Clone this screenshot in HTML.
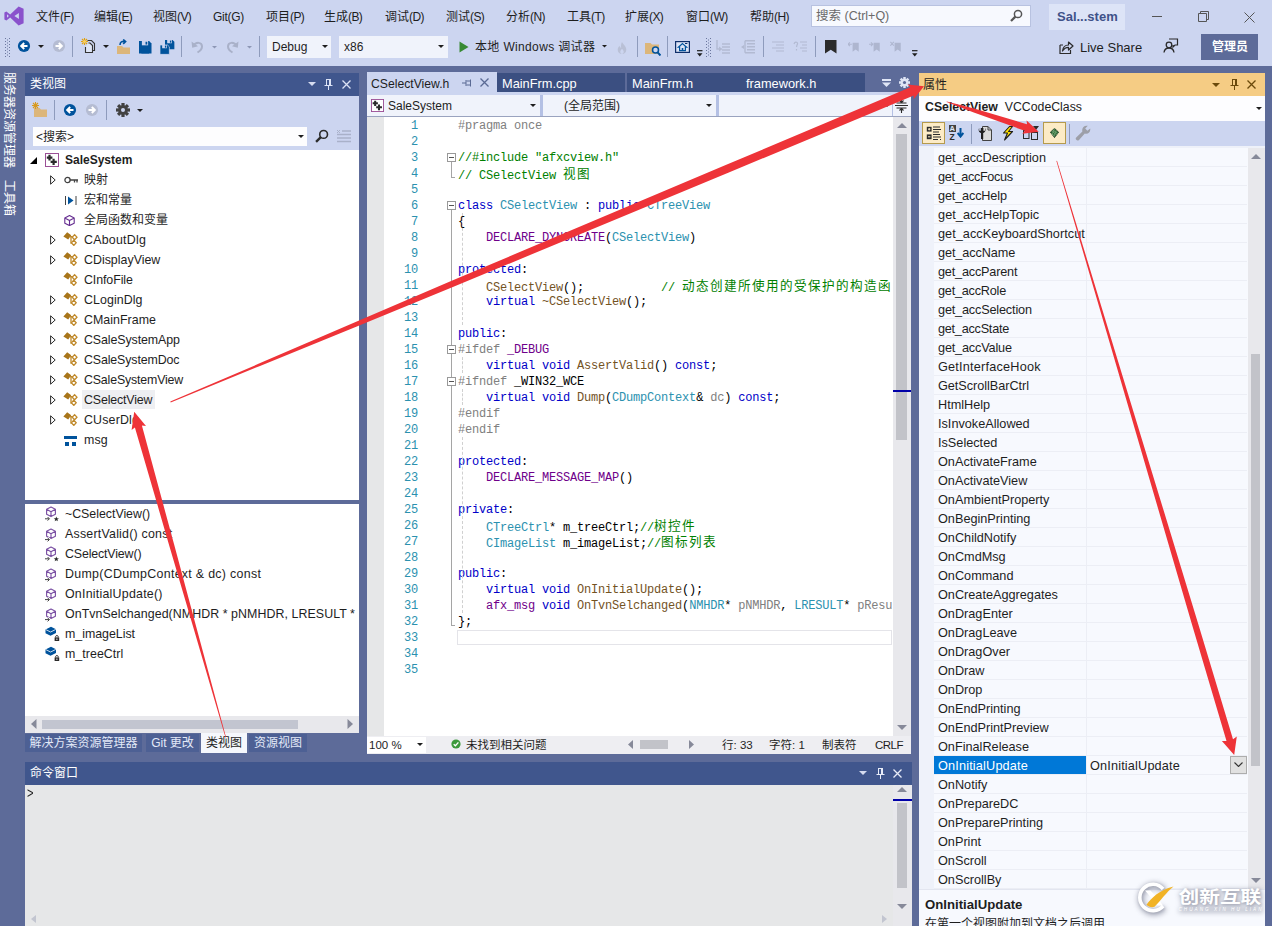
<!DOCTYPE html>
<html lang="zh-CN"><head><meta charset="utf-8"><title>SaleSystem - Visual Studio</title>
<style>
*{box-sizing:border-box;margin:0;padding:0}
html,body{width:1272px;height:926px;overflow:hidden}
body{background:#5d6b99;font-family:"Liberation Sans","Noto Sans CJK SC",sans-serif;font-size:12px;color:#1e1e1e;position:relative}
.abs{position:absolute}
.t{position:absolute;white-space:pre;line-height:14px;height:14px}
#top{position:absolute;left:0;top:0;width:1272px;height:66px;background:#ccd5f0}
.menu{position:absolute;top:10px;font-size:12px;line-height:14px;color:#1e1e1e;white-space:pre}
.sep{position:absolute;width:1px;background:#8e9bbc}
.combo{position:absolute;background:#f0f3fb;height:22px;top:36px;font-size:12px;line-height:22px;padding-left:5px;color:#1e1e1e}
.dd{position:absolute;width:0;height:0;border-left:3px solid transparent;border-right:3px solid transparent;border-top:3px solid #1e1e1e}
.panel-title{position:absolute;height:23px;background:#40568d;color:#fff;font-size:12px;line-height:23px;padding-left:5px}
.tree-row{position:absolute;left:0;height:20px;line-height:20px;font-size:12.4px;white-space:pre;color:#1e1e1e}
.code{font-family:"Liberation Mono","Noto Sans CJK SC",monospace;font-size:12px;letter-spacing:-0.2px;line-height:16px;white-space:pre;color:#000}
.cj{font-family:"Noto Sans CJK SC","WenQuanYi Zen Hei",sans-serif;font-size:12.6px;letter-spacing:1.4px;position:relative;top:-1.5px}
.ln{position:absolute;left:384px;width:34px;text-align:right;color:#2b91af;height:16px}
.cl{position:absolute;left:458px;height:16px}
.k{color:#0000c8}.ty{color:#2b91af}.mc{color:#6f008a}.pp{color:#808080}.cm{color:#008000}.fn{color:#74531f}.pr{color:#808080}
.prow{position:absolute;left:15px;width:313px;height:19px;border-bottom:1px solid #eceef5;font-size:12.7px;line-height:18px;white-space:pre;color:#1e1e1e}
.prow span{position:absolute;left:4px;top:1px}
</style></head><body>
<div id="top">
<svg class="abs" style="left:4px;top:6px" width="20" height="20" viewBox="0 0 20 20" ><path d="M14.6 0.6 L19.6 2.8 V17.2 L14.6 19.4 L6.2 11.6 L2.4 14.6 L0.4 13.6 V6.4 L2.4 5.4 L6.2 8.4 Z M14.9 7 L10.4 10 L14.9 13 Z M3 8.3 V11.7 L4.9 10 Z" fill="#8a52cc" fill-rule="evenodd"/></svg>
<div class="menu" style="left:36px">文件<span style="letter-spacing:-0.6px">(F)</span></div>
<div class="menu" style="left:94px">编辑<span style="letter-spacing:-0.6px">(E)</span></div>
<div class="menu" style="left:153px">视图<span style="letter-spacing:-0.6px">(V)</span></div>
<div class="menu" style="left:213px"><span style="letter-spacing:-0.3px">Git(G)</span></div>
<div class="menu" style="left:266px">项目<span style="letter-spacing:-0.6px">(P)</span></div>
<div class="menu" style="left:324px">生成<span style="letter-spacing:-0.6px">(B)</span></div>
<div class="menu" style="left:385px">调试<span style="letter-spacing:-0.6px">(D)</span></div>
<div class="menu" style="left:446px">测试<span style="letter-spacing:-0.6px">(S)</span></div>
<div class="menu" style="left:506px">分析<span style="letter-spacing:-0.6px">(N)</span></div>
<div class="menu" style="left:567px">工具<span style="letter-spacing:-0.6px">(T)</span></div>
<div class="menu" style="left:625px">扩展<span style="letter-spacing:-0.6px">(X)</span></div>
<div class="menu" style="left:686px">窗口<span style="letter-spacing:-0.6px">(W)</span></div>
<div class="menu" style="left:750px">帮助<span style="letter-spacing:-0.6px">(H)</span></div>
<div class="abs" style="left:811px;top:5px;width:220px;height:22px;background:#f7f9fe;border:1px solid #b8c2e0"></div>
<div class="t" style="left:816px;top:9px;color:#6a6a6a;font-size:12.5px;line-height:15px">搜索 (Ctrl+Q)</div>
<svg class="abs" style="left:1010px;top:9px" width="13" height="13" viewBox="0 0 13 13" ><circle cx="8" cy="5" r="3.6" fill="none" stroke="#555" stroke-width="1.5"/><path d="M5.4 7.6 L1 12" stroke="#555" stroke-width="2.2"/></svg>
<div class="abs" style="left:1049px;top:4px;width:76px;height:26px;background:#dde4f7"></div>
<div class="t" style="left:1057px;top:9px;font-weight:bold;font-size:13px;color:#3f5289;line-height:15px">Sal...stem</div>
<div class="abs" style="left:1152px;top:16px;width:10px;height:1px;background:#555"></div>
<svg class="abs" style="left:1198px;top:11px" width="11" height="11" viewBox="0 0 11 11" ><path d="M2.5 2.5 V0.5 H10.5 V8.5 H8.5 M0.5 2.5 H8.5 V10.5 H0.5 Z" fill="none" stroke="#555" stroke-width="1"/></svg>
<svg class="abs" style="left:1244px;top:12px" width="11" height="11" viewBox="0 0 11 11" ><path d="M0.5 0.5 L10.5 10.5 M10.5 0.5 L0.5 10.5" stroke="#555" stroke-width="1"/></svg>
<svg class="abs" style="left:5px;top:38px" width="5" height="19" viewBox="0 0 5 19" ><rect x="0" y="0" width="1" height="1" fill="#6a769e"/><rect x="2" y="1.5" width="1" height="1" fill="#6a769e"/><rect x="4" y="0" width="1" height="1" fill="#6a769e"/><rect x="0" y="3" width="1" height="1" fill="#6a769e"/><rect x="2" y="4.5" width="1" height="1" fill="#6a769e"/><rect x="4" y="3" width="1" height="1" fill="#6a769e"/><rect x="0" y="6" width="1" height="1" fill="#6a769e"/><rect x="2" y="7.5" width="1" height="1" fill="#6a769e"/><rect x="4" y="6" width="1" height="1" fill="#6a769e"/><rect x="0" y="9" width="1" height="1" fill="#6a769e"/><rect x="2" y="10.5" width="1" height="1" fill="#6a769e"/><rect x="4" y="9" width="1" height="1" fill="#6a769e"/><rect x="0" y="12" width="1" height="1" fill="#6a769e"/><rect x="2" y="13.5" width="1" height="1" fill="#6a769e"/><rect x="4" y="12" width="1" height="1" fill="#6a769e"/><rect x="0" y="15" width="1" height="1" fill="#6a769e"/><rect x="2" y="16.5" width="1" height="1" fill="#6a769e"/><rect x="4" y="15" width="1" height="1" fill="#6a769e"/><rect x="0" y="18" width="1" height="1" fill="#6a769e"/><rect x="2" y="19.5" width="1" height="1" fill="#6a769e"/><rect x="4" y="18" width="1" height="1" fill="#6a769e"/></svg>
<svg class="abs" style="left:17px;top:39px" width="14" height="14" viewBox="0 0 14 14" ><circle cx="7" cy="7" r="6.1" fill="#00539c"/><path d="M10.5 7 H4.5 M7.2 4 L4.2 7 L7.2 10" stroke="#fff" stroke-width="2" fill="none"/></svg>
<svg class="abs" style="left:38px;top:45px" width="6" height="3.0" viewBox="0 0 6 3.0" ><path d="M0 0 H6 L3.0 3.0 Z" fill="#1e1e1e"/></svg>
<svg class="abs" style="left:52px;top:39px" width="14" height="14" viewBox="0 0 14 14" ><circle cx="7" cy="7" r="6.1" fill="#b5bcd2"/><path d="M3.5 7 H9.5 M6.8 4 L9.8 7 L6.8 10" stroke="#fff" stroke-width="2" fill="none"/></svg>
<div class="sep" style="left:72px;top:36px;height:21px"></div>
<svg class="abs" style="left:81px;top:38px" width="15" height="16" viewBox="0 0 15 16" ><path d="M6.5 2.5 H10.5 L13.5 5.5 V12.5 H11.5" fill="none" stroke="#333" stroke-width="1.1"/><path d="M4.5 9 V14.5 H11.5 V7.5 L9 5 H7.5" fill="#dfe6f7" stroke="#333" stroke-width="1.1"/><path d="M3.5 0 V7 M0 3.5 H7 M1 1 L6 6 M6 1 L1 6" stroke="#e0a010" stroke-width="1.1"/><circle cx="3.5" cy="3.5" r="1.6" fill="#f8d060"/></svg>
<svg class="abs" style="left:103px;top:45px" width="6" height="3.0" viewBox="0 0 6 3.0" ><path d="M0 0 H6 L3.0 3.0 Z" fill="#1e1e1e"/></svg>
<svg class="abs" style="left:116px;top:39px" width="15" height="16" viewBox="0 0 15 16" ><path d="M1 7 H6 L7.5 8.5 H14 V15 H1 Z" fill="#dcb67a"/><path d="M4 6 C4 3 6 2 9 2.5 M7.2 0.5 L9.6 2.6 L7.2 4.8" fill="none" stroke="#00539c" stroke-width="1.6"/></svg>
<svg class="abs" style="left:139px;top:41px" width="12.5" height="12.5" viewBox="0 0 13 13" ><path d="M0 0 H10.5 L13 2.5 V13 H0 Z" fill="#00539c"/><rect x="3" y="0" width="6.5" height="4.5" fill="#ccd5f0"/><rect x="6.8" y="0.8" width="1.8" height="2.9" fill="#00539c"/><rect x="2.5" y="8" width="8" height="5" fill="#00539c"/></svg>
<svg class="abs" style="left:160px;top:40px" width="15" height="15" viewBox="0 0 15 15" ><g transform="translate(5,0) scale(0.72)"><path d="M0 0 H10.5 L13 2.5 V13 H0 Z" fill="#00539c"/><rect x="3" y="0" width="6.5" height="4.5" fill="#ccd5f0"/><rect x="6.8" y="0.8" width="1.8" height="2.9" fill="#00539c"/></g><g transform="translate(0,5) scale(0.72)"><path d="M0 0 H10.5 L13 2.5 V13 H0 Z" fill="#00539c" stroke="#ccd5f0" stroke-width="1"/><rect x="3" y="0" width="6.5" height="4.5" fill="#ccd5f0"/><rect x="6.8" y="0.8" width="1.8" height="2.9" fill="#00539c"/></g></svg>
<div class="sep" style="left:181px;top:36px;height:21px"></div>
<svg class="abs" style="left:191px;top:40px" width="13" height="14" viewBox="0 0 13 14" ><g><path d="M2 6 C5 1.5 11 2 11 6.5 C11 9.5 9 11 6.5 12.5" fill="none" stroke="#a9b1c9" stroke-width="2"/><path d="M0.5 1.5 L1.2 7.8 L7 6.2 Z" fill="#a9b1c9"/></g></svg>
<svg class="abs" style="left:212px;top:46px" width="5" height="2.5" viewBox="0 0 5 2.5" ><path d="M0 0 H5 L2.5 2.5 Z" fill="#8d97b5"/></svg>
<svg class="abs" style="left:226px;top:40px" width="13" height="14" viewBox="0 0 13 14" ><g transform="translate(13,0) scale(-1,1)"><path d="M2 6 C5 1.5 11 2 11 6.5 C11 9.5 9 11 6.5 12.5" fill="none" stroke="#a9b1c9" stroke-width="2"/><path d="M0.5 1.5 L1.2 7.8 L7 6.2 Z" fill="#a9b1c9"/></g></svg>
<svg class="abs" style="left:247px;top:46px" width="5" height="2.5" viewBox="0 0 5 2.5" ><path d="M0 0 H5 L2.5 2.5 Z" fill="#8d97b5"/></svg>
<div class="sep" style="left:259px;top:36px;height:21px"></div>
<div class="combo" style="left:267px;width:64px">Debug</div>
<svg class="abs" style="left:322px;top:45px" width="6" height="3.0" viewBox="0 0 6 3.0" ><path d="M0 0 H6 L3.0 3.0 Z" fill="#1e1e1e"/></svg>
<div class="combo" style="left:339px;width:109px">x86</div>
<svg class="abs" style="left:438px;top:45px" width="6" height="3.0" viewBox="0 0 6 3.0" ><path d="M0 0 H6 L3.0 3.0 Z" fill="#1e1e1e"/></svg>
<svg class="abs" style="left:459px;top:41px" width="10" height="12" viewBox="0 0 10 12" ><path d="M0.5 0.5 L9.5 6 L0.5 11.5 Z" fill="#388a34"/></svg>
<div class="t" style="left:475px;top:40px;letter-spacing:0.35px">本地 Windows 调试器</div>
<svg class="abs" style="left:602px;top:45px" width="5" height="2.5" viewBox="0 0 5 2.5" ><path d="M0 0 H5 L2.5 2.5 Z" fill="#1e1e1e"/></svg>
<svg class="abs" style="left:617px;top:42px" width="10" height="12" viewBox="0 0 11 14" ><path d="M5.5 0 C7 3 10.5 5 10.5 9 C10.5 12 8.5 14 5.5 14 C2.5 14 0.5 12 0.5 9 C0.5 7 1.5 6 2.5 4.5 C3 6 3.5 6.5 4.5 7 C4 4 4.5 2 5.5 0 Z" fill="#b9c0d6"/><path d="M5.5 8 C6.5 9.5 7.5 10 7.5 11.5 C7.5 13 6.5 14 5.5 14 C4.5 14 3.5 13 3.5 11.5 C3.5 10 4.5 9.5 5.5 8Z" fill="#ccd5f0"/></svg>
<div class="sep" style="left:637px;top:36px;height:21px"></div>
<svg class="abs" style="left:645px;top:41px" width="16" height="15" viewBox="0 0 16 15" ><path d="M0 2 H5.5 L7 3.5 H14 V13 H0 Z" fill="#dcb67a"/><circle cx="10.5" cy="9" r="3" fill="#ccd5f0" stroke="#00539c" stroke-width="1.5"/><path d="M12.6 11.4 L15.5 14.5" stroke="#00539c" stroke-width="2"/></svg>
<div class="sep" style="left:667px;top:36px;height:21px"></div>
<svg class="abs" style="left:675px;top:41px" width="15" height="12" viewBox="0 0 15 12" ><rect x="0.6" y="0.6" width="13.8" height="10.8" fill="#dbe3f6" stroke="#0f2f6a" stroke-width="1.2"/><path d="M7.5 2.6 L11.6 6.2 H10.4 V9.6 H4.6 V6.2 H3.4 Z" fill="none" stroke="#00539c" stroke-width="1.2"/><rect x="6.7" y="7" width="1.6" height="2.6" fill="#00539c"/><rect x="10" y="2" width="2.4" height="1" fill="#0f2f6a"/></svg>
<svg class="abs" style="left:697px;top:50px" width="5.5" height="6.5" viewBox="0 0 7 8" ><rect x="0" y="0" width="7" height="1.5" fill="#1e1e1e"/><path d="M0 4 H7 L3.5 8 Z" fill="#1e1e1e"/></svg>
<svg class="abs" style="left:706px;top:38px" width="5" height="19" viewBox="0 0 5 19" ><rect x="0" y="0" width="1" height="1" fill="#6a769e"/><rect x="2" y="1.5" width="1" height="1" fill="#6a769e"/><rect x="4" y="0" width="1" height="1" fill="#6a769e"/><rect x="0" y="3" width="1" height="1" fill="#6a769e"/><rect x="2" y="4.5" width="1" height="1" fill="#6a769e"/><rect x="4" y="3" width="1" height="1" fill="#6a769e"/><rect x="0" y="6" width="1" height="1" fill="#6a769e"/><rect x="2" y="7.5" width="1" height="1" fill="#6a769e"/><rect x="4" y="6" width="1" height="1" fill="#6a769e"/><rect x="0" y="9" width="1" height="1" fill="#6a769e"/><rect x="2" y="10.5" width="1" height="1" fill="#6a769e"/><rect x="4" y="9" width="1" height="1" fill="#6a769e"/><rect x="0" y="12" width="1" height="1" fill="#6a769e"/><rect x="2" y="13.5" width="1" height="1" fill="#6a769e"/><rect x="4" y="12" width="1" height="1" fill="#6a769e"/><rect x="0" y="15" width="1" height="1" fill="#6a769e"/><rect x="2" y="16.5" width="1" height="1" fill="#6a769e"/><rect x="4" y="15" width="1" height="1" fill="#6a769e"/><rect x="0" y="18" width="1" height="1" fill="#6a769e"/><rect x="2" y="19.5" width="1" height="1" fill="#6a769e"/><rect x="4" y="18" width="1" height="1" fill="#6a769e"/></svg>
<svg class="abs" style="left:716px;top:40px" width="15" height="14" viewBox="0 0 15 14" ><path d="M1 0 V9 H5 M6 4 H14 M6 7 H14 M6 10 H14 M6 13 H14" stroke="#b2bad2" stroke-width="1.4" fill="none"/><path d="M3 6.5 L6.5 9 L3 11.5Z" fill="#b2bad2"/></svg>
<svg class="abs" style="left:741px;top:40px" width="15" height="14" viewBox="0 0 15 14" ><path d="M4 0.7 H14 M6 3.7 H14 M6 6.7 H14 M6 9.7 H14 M4 12.7 H14 M4 0.7 V12.7" stroke="#b2bad2" stroke-width="1.4" fill="none"/><path d="M0 7 L3 5 V9Z" fill="#b2bad2"/></svg>
<div class="sep" style="left:763px;top:36px;height:21px"></div>
<svg class="abs" style="left:770px;top:41px" width="15" height="14" viewBox="0 0 15 14" ><path d="M2 1 H14 M6 4 H14 M2 7 H14 M6 10 H14" stroke="#b2bad2" stroke-width="1.2" fill="none"/></svg>
<svg class="abs" style="left:793px;top:41px" width="15" height="14" viewBox="0 0 15 14" ><path d="M7 1 H14 M9 4 H14 M7 7 H14 M9 10 H14 M1 3 C2 0 6 1 4 4 L3.5 6 M3.5 8 V9.5" stroke="#b2bad2" stroke-width="1.2" fill="none"/></svg>
<div class="sep" style="left:815px;top:36px;height:21px"></div>
<svg class="abs" style="left:825px;top:40px" width="11.5" height="13.5" viewBox="0 0 12 14" ><path d="M0 0 H12 V14 L6 10 L0 14 Z" fill="#2b2b2b"/></svg>
<svg class="abs" style="left:848px;top:41px" width="11.5" height="11" viewBox="0 0 15 14" ><path d="M0 4 H5 M2.5 1.5 L0 4 L2.5 6.5" stroke="#aeb6cf" stroke-width="1.4" fill="none"/><path d="M6 2 H14 V14 L10 11 L6 14 Z" fill="#aeb6cf"/></svg>
<svg class="abs" style="left:869px;top:41px" width="11.5" height="11" viewBox="0 0 15 14" ><path d="M0 4 H5 M2.5 1.5 L5 4 L2.5 6.5" stroke="#aeb6cf" stroke-width="1.4" fill="none"/><path d="M6 2 H14 V14 L10 11 L6 14 Z" fill="#aeb6cf"/></svg>
<svg class="abs" style="left:890px;top:41px" width="11.5" height="11" viewBox="0 0 15 14" ><path d="M0.5 1 L5 6 M5 1 L0.5 6" stroke="#aeb6cf" stroke-width="1.4" fill="none"/><path d="M6 2 H14 V14 L10 11 L6 14 Z" fill="#aeb6cf"/></svg>
<svg class="abs" style="left:912px;top:50px" width="5.5" height="6.5" viewBox="0 0 7 8" ><rect x="0" y="0" width="7" height="1.5" fill="#1e1e1e"/><path d="M0 4 H7 L3.5 8 Z" fill="#1e1e1e"/></svg>
<svg class="abs" style="left:1059px;top:40px" width="15" height="15" viewBox="0 0 15 15" ><path d="M1 5 H4 M1 5 V13.5 H11.5 V10" fill="none" stroke="#2b2b2b" stroke-width="1.2"/><path d="M3.5 11 C4 7 6.5 5 9.5 5 V2 L14 6 L9.5 10 V7.3 C7 7.3 5 8.5 3.5 11 Z" fill="none" stroke="#2b2b2b" stroke-width="1.2" stroke-linejoin="round"/></svg>
<div class="t" style="left:1080px;top:40px;font-size:13px;line-height:15px">Live Share</div>
<svg class="abs" style="left:1163px;top:38px" width="16" height="16" viewBox="0 0 16 16" ><path d="M6 1 H14.5 V7 H12 L10 9 V7" fill="none" stroke="#2b2b2b" stroke-width="1.2"/><circle cx="6" cy="7" r="2.8" fill="none" stroke="#2b2b2b" stroke-width="1.3"/><path d="M1 14.5 C1.5 11 3.5 10 6 10 C8.5 10 10.5 11 11 14.5" fill="none" stroke="#2b2b2b" stroke-width="1.3"/></svg>
<div class="abs" style="left:1201px;top:34px;width:57px;height:26px;background:#5d6b99"></div>
<div class="t" style="left:1212px;top:40px;color:#fff;font-weight:bold">管理员</div>
</div>
<div class="abs" style="left:2px;top:72px;width:14px;color:#fff;font-size:12px;line-height:14px;writing-mode:vertical-rl;text-orientation:sideways;white-space:pre;height:100px">服务器资源管理器</div>
<div class="abs" style="left:2px;top:180px;width:14px;color:#fff;font-size:12px;line-height:14px;writing-mode:vertical-rl;text-orientation:sideways;white-space:pre;height:40px">工具箱</div>
<div class="abs" style="left:25px;top:73px;width:334px;height:660px;background:#fff">
<div class="panel-title" style="left:0;top:0;width:334px">类视图</div>
<svg class="abs" style="left:283px;top:9px" width="8" height="4.0" viewBox="0 0 8 4.0" ><path d="M0 0 H8 L4.0 4.0 Z" fill="#d6dcf0"/></svg>
<svg class="abs" style="left:299px;top:6px" width="9" height="11" viewBox="0 0 9 11" ><path d="M2 0.5 H7 M2.5 0.5 V6 M6.5 0.5 V6 M5.5 0.5 V6 M0.5 6.5 H8.5 M4.5 6.5 V11" fill="none" stroke="#dbe2f5" stroke-width="1"/></svg>
<svg class="abs" style="left:317px;top:7px" width="9" height="9" viewBox="0 0 9 9" ><path d="M0.5 0.5 L8.5 8.5 M8.5 0.5 L0.5 8.5" stroke="#dbe2f5" stroke-width="1.3"/></svg>
<div class="abs" style="left:0;top:23px;width:334px;height:54px;background:#ccd5f0"></div>
<svg class="abs" style="left:7px;top:29px" width="16" height="16" viewBox="0 0 16 16" ><path d="M2 6 H7.5 L9 7.5 H15 V15 H2 Z" fill="#dcb67a"/><path d="M3.5 0 V7 M0 3.5 H7 M1 1 L6 6 M6 1 L1 6" stroke="#d89a1e" stroke-width="1.1"/></svg>
<div class="sep" style="left:29px;top:27px;height:20px"></div>
<svg class="abs" style="left:38px;top:30px" width="14" height="14" viewBox="0 0 14 14" ><circle cx="7" cy="7" r="6.1" fill="#00539c"/><path d="M10.5 7 H4.5 M7.2 4 L4.2 7 L7.2 10" stroke="#fff" stroke-width="2" fill="none"/></svg>
<svg class="abs" style="left:60px;top:30px" width="14" height="14" viewBox="0 0 14 14" ><circle cx="7" cy="7" r="6.1" fill="#b5bcd2"/><path d="M3.5 7 H9.5 M6.8 4 L9.8 7 L6.8 10" stroke="#fff" stroke-width="2" fill="none"/></svg>
<div class="sep" style="left:81px;top:27px;height:20px"></div>
<svg class="abs" style="left:91px;top:30px" width="14" height="14" viewBox="0 0 14 14" ><g transform="translate(7,7)"><rect x="-1.6" y="-7" width="3.2" height="4" fill="#424242" transform="rotate(0)"/><rect x="-1.6" y="-7" width="3.2" height="4" fill="#424242" transform="rotate(45)"/><rect x="-1.6" y="-7" width="3.2" height="4" fill="#424242" transform="rotate(90)"/><rect x="-1.6" y="-7" width="3.2" height="4" fill="#424242" transform="rotate(135)"/><rect x="-1.6" y="-7" width="3.2" height="4" fill="#424242" transform="rotate(180)"/><rect x="-1.6" y="-7" width="3.2" height="4" fill="#424242" transform="rotate(225)"/><rect x="-1.6" y="-7" width="3.2" height="4" fill="#424242" transform="rotate(270)"/><rect x="-1.6" y="-7" width="3.2" height="4" fill="#424242" transform="rotate(315)"/><circle r="4.8" fill="#424242"/><circle r="2" fill="#ccd5f0"/></g></svg>
<svg class="abs" style="left:112px;top:36px" width="6" height="3.0" viewBox="0 0 6 3.0" ><path d="M0 0 H6 L3.0 3.0 Z" fill="#1e1e1e"/></svg>
<div class="abs" style="left:8px;top:54px;width:274px;height:19px;background:#fdfdfe"></div>
<div class="t" style="left:11px;top:57px;color:#1e1e1e">&lt;搜索&gt;</div>
<svg class="abs" style="left:273px;top:62px" width="6" height="3.0" viewBox="0 0 6 3.0" ><path d="M0 0 H6 L3.0 3.0 Z" fill="#1e1e1e"/></svg>
<svg class="abs" style="left:290px;top:56px" width="14" height="14" viewBox="0 0 13 13" ><circle cx="8" cy="5" r="3.6" fill="none" stroke="#2b2b2b" stroke-width="1.5"/><path d="M5.4 7.6 L1 12" stroke="#2b2b2b" stroke-width="2.2"/></svg>
<svg class="abs" style="left:312px;top:57px" width="14" height="13" viewBox="0 0 14 13" ><path d="M5 1 H14 M0 4.5 H14 M0 8 H14 M0 11.5 H14" stroke="#a9b1c9" stroke-width="1.6"/><path d="M0 0 L3 3 M3 0 L0 3" stroke="#a9b1c9" stroke-width="1"/></svg>
<svg class="abs" style="left:5px;top:84px" width="7" height="7" viewBox="0 0 7 7" ><path d="M7 0 V7 H0 Z" fill="#000"/></svg>
<svg class="abs" style="left:20px;top:80px" width="14" height="14" viewBox="0 0 14 14" ><rect x="0.5" y="0.5" width="13" height="13" fill="#fff" stroke="#9b4f96"/><path d="M4.5 1.8 V7.6 M1.8 4.6 H7.4 M8.6 5.8 V12 M5.6 8.9 H11.8" stroke="#2b2b2b" stroke-width="2.2"/></svg>
<div class="tree-row" style="left:40px;top:77px;font-weight:bold;font-size:12px">SaleSystem</div>
<svg class="abs" style="left:25px;top:102px" width="6" height="10" viewBox="0 0 6 10" ><path d="M0.6 0.8 L5.2 5 L0.6 9.2 Z" fill="none" stroke="#2b2b2b" stroke-width="1"/></svg>
<svg class="abs" style="left:39px;top:103px" width="15" height="8" viewBox="0 0 15 8" ><circle cx="3.5" cy="4" r="2.6" fill="none" stroke="#424242" stroke-width="1.3"/><path d="M6 4 H14 M10.5 4 V6.5 M13 4 V6.5" stroke="#424242" stroke-width="1.3" fill="none"/></svg>
<div class="tree-row" style="left:59px;top:97px;font-size:12px;">映射</div>
<svg class="abs" style="left:40px;top:123px" width="12" height="9" viewBox="0 0 12 9" ><path d="M0.5 0 V9 M11 0 V9" stroke="#424242" stroke-width="1"/><path d="M3 0.5 L8.5 4.5 L3 8.5 Z" fill="#00539c"/></svg>
<div class="tree-row" style="left:59px;top:117px;font-size:12px;">宏和常量</div>
<svg class="abs" style="left:39px;top:142px" width="11" height="11" viewBox="0 0 11 11" ><path d="M5.5 0.6 L10.2 3 V8.2 L5.5 10.6 L0.8 8.2 V3 Z M0.8 3 L5.5 5.4 L10.2 3 M5.5 5.4 V10.6" fill="none" stroke="#652d90" stroke-width="1.1" stroke-linejoin="round"/></svg>
<div class="tree-row" style="left:59px;top:137px;font-size:12px;">全局函数和变量</div>
<svg class="abs" style="left:25px;top:162px" width="6" height="10" viewBox="0 0 6 10" ><path d="M0.6 0.8 L5.2 5 L0.6 9.2 Z" fill="none" stroke="#2b2b2b" stroke-width="1"/></svg>
<svg class="abs" style="left:38px;top:159px" width="15" height="14" viewBox="0 0 15 14" ><path d="M4.2 0.3 L8.2 3.2 L5.2 7.6 L0.4 4.6 Z" fill="#a8751a"/><path d="M6.5 4.6 H10 M8 5 V11 H9" stroke="#c08a2c" stroke-width="1.3" fill="none"/><path d="M11.6 2.6 L14 5.2 L11.6 7.8 L9.2 5.2 Z" fill="#fff" stroke="#c08a2c" stroke-width="1.3"/><path d="M10.8 8.2 L13.2 10.8 L10.8 13.4 L8.4 10.8 Z" fill="#fff" stroke="#c08a2c" stroke-width="1.3"/></svg>
<div class="tree-row" style="left:59px;top:157px;letter-spacing:0.231px;">CAboutDlg</div>
<svg class="abs" style="left:25px;top:182px" width="6" height="10" viewBox="0 0 6 10" ><path d="M0.6 0.8 L5.2 5 L0.6 9.2 Z" fill="none" stroke="#2b2b2b" stroke-width="1"/></svg>
<svg class="abs" style="left:38px;top:179px" width="15" height="14" viewBox="0 0 15 14" ><path d="M4.2 0.3 L8.2 3.2 L5.2 7.6 L0.4 4.6 Z" fill="#a8751a"/><path d="M6.5 4.6 H10 M8 5 V11 H9" stroke="#c08a2c" stroke-width="1.3" fill="none"/><path d="M11.6 2.6 L14 5.2 L11.6 7.8 L9.2 5.2 Z" fill="#fff" stroke="#c08a2c" stroke-width="1.3"/><path d="M10.8 8.2 L13.2 10.8 L10.8 13.4 L8.4 10.8 Z" fill="#fff" stroke="#c08a2c" stroke-width="1.3"/></svg>
<div class="tree-row" style="left:59px;top:177px;letter-spacing:0.007px;">CDisplayView</div>
<svg class="abs" style="left:38px;top:199px" width="15" height="14" viewBox="0 0 15 14" ><path d="M4.2 0.3 L8.2 3.2 L5.2 7.6 L0.4 4.6 Z" fill="#a8751a"/><path d="M6.5 4.6 H10 M8 5 V11 H9" stroke="#c08a2c" stroke-width="1.3" fill="none"/><path d="M11.6 2.6 L14 5.2 L11.6 7.8 L9.2 5.2 Z" fill="#fff" stroke="#c08a2c" stroke-width="1.3"/><path d="M10.8 8.2 L13.2 10.8 L10.8 13.4 L8.4 10.8 Z" fill="#fff" stroke="#c08a2c" stroke-width="1.3"/></svg>
<div class="tree-row" style="left:59px;top:197px;letter-spacing:-0.088px;">CInfoFile</div>
<svg class="abs" style="left:25px;top:222px" width="6" height="10" viewBox="0 0 6 10" ><path d="M0.6 0.8 L5.2 5 L0.6 9.2 Z" fill="none" stroke="#2b2b2b" stroke-width="1"/></svg>
<svg class="abs" style="left:38px;top:219px" width="15" height="14" viewBox="0 0 15 14" ><path d="M4.2 0.3 L8.2 3.2 L5.2 7.6 L0.4 4.6 Z" fill="#a8751a"/><path d="M6.5 4.6 H10 M8 5 V11 H9" stroke="#c08a2c" stroke-width="1.3" fill="none"/><path d="M11.6 2.6 L14 5.2 L11.6 7.8 L9.2 5.2 Z" fill="#fff" stroke="#c08a2c" stroke-width="1.3"/><path d="M10.8 8.2 L13.2 10.8 L10.8 13.4 L8.4 10.8 Z" fill="#fff" stroke="#c08a2c" stroke-width="1.3"/></svg>
<div class="tree-row" style="left:59px;top:217px;letter-spacing:0.071px;">CLoginDlg</div>
<svg class="abs" style="left:25px;top:242px" width="6" height="10" viewBox="0 0 6 10" ><path d="M0.6 0.8 L5.2 5 L0.6 9.2 Z" fill="none" stroke="#2b2b2b" stroke-width="1"/></svg>
<svg class="abs" style="left:38px;top:239px" width="15" height="14" viewBox="0 0 15 14" ><path d="M4.2 0.3 L8.2 3.2 L5.2 7.6 L0.4 4.6 Z" fill="#a8751a"/><path d="M6.5 4.6 H10 M8 5 V11 H9" stroke="#c08a2c" stroke-width="1.3" fill="none"/><path d="M11.6 2.6 L14 5.2 L11.6 7.8 L9.2 5.2 Z" fill="#fff" stroke="#c08a2c" stroke-width="1.3"/><path d="M10.8 8.2 L13.2 10.8 L10.8 13.4 L8.4 10.8 Z" fill="#fff" stroke="#c08a2c" stroke-width="1.3"/></svg>
<div class="tree-row" style="left:59px;top:237px;letter-spacing:0.039px;">CMainFrame</div>
<svg class="abs" style="left:25px;top:262px" width="6" height="10" viewBox="0 0 6 10" ><path d="M0.6 0.8 L5.2 5 L0.6 9.2 Z" fill="none" stroke="#2b2b2b" stroke-width="1"/></svg>
<svg class="abs" style="left:38px;top:259px" width="15" height="14" viewBox="0 0 15 14" ><path d="M4.2 0.3 L8.2 3.2 L5.2 7.6 L0.4 4.6 Z" fill="#a8751a"/><path d="M6.5 4.6 H10 M8 5 V11 H9" stroke="#c08a2c" stroke-width="1.3" fill="none"/><path d="M11.6 2.6 L14 5.2 L11.6 7.8 L9.2 5.2 Z" fill="#fff" stroke="#c08a2c" stroke-width="1.3"/><path d="M10.8 8.2 L13.2 10.8 L10.8 13.4 L8.4 10.8 Z" fill="#fff" stroke="#c08a2c" stroke-width="1.3"/></svg>
<div class="tree-row" style="left:59px;top:257px;letter-spacing:-0.094px;">CSaleSystemApp</div>
<svg class="abs" style="left:25px;top:282px" width="6" height="10" viewBox="0 0 6 10" ><path d="M0.6 0.8 L5.2 5 L0.6 9.2 Z" fill="none" stroke="#2b2b2b" stroke-width="1"/></svg>
<svg class="abs" style="left:38px;top:279px" width="15" height="14" viewBox="0 0 15 14" ><path d="M4.2 0.3 L8.2 3.2 L5.2 7.6 L0.4 4.6 Z" fill="#a8751a"/><path d="M6.5 4.6 H10 M8 5 V11 H9" stroke="#c08a2c" stroke-width="1.3" fill="none"/><path d="M11.6 2.6 L14 5.2 L11.6 7.8 L9.2 5.2 Z" fill="#fff" stroke="#c08a2c" stroke-width="1.3"/><path d="M10.8 8.2 L13.2 10.8 L10.8 13.4 L8.4 10.8 Z" fill="#fff" stroke="#c08a2c" stroke-width="1.3"/></svg>
<div class="tree-row" style="left:59px;top:277px;letter-spacing:-0.128px;">CSaleSystemDoc</div>
<svg class="abs" style="left:25px;top:302px" width="6" height="10" viewBox="0 0 6 10" ><path d="M0.6 0.8 L5.2 5 L0.6 9.2 Z" fill="none" stroke="#2b2b2b" stroke-width="1"/></svg>
<svg class="abs" style="left:38px;top:299px" width="15" height="14" viewBox="0 0 15 14" ><path d="M4.2 0.3 L8.2 3.2 L5.2 7.6 L0.4 4.6 Z" fill="#a8751a"/><path d="M6.5 4.6 H10 M8 5 V11 H9" stroke="#c08a2c" stroke-width="1.3" fill="none"/><path d="M11.6 2.6 L14 5.2 L11.6 7.8 L9.2 5.2 Z" fill="#fff" stroke="#c08a2c" stroke-width="1.3"/><path d="M10.8 8.2 L13.2 10.8 L10.8 13.4 L8.4 10.8 Z" fill="#fff" stroke="#c08a2c" stroke-width="1.3"/></svg>
<div class="tree-row" style="left:59px;top:297px;letter-spacing:-0.174px;">CSaleSystemView</div>
<svg class="abs" style="left:25px;top:322px" width="6" height="10" viewBox="0 0 6 10" ><path d="M0.6 0.8 L5.2 5 L0.6 9.2 Z" fill="none" stroke="#2b2b2b" stroke-width="1"/></svg>
<svg class="abs" style="left:38px;top:319px" width="15" height="14" viewBox="0 0 15 14" ><path d="M4.2 0.3 L8.2 3.2 L5.2 7.6 L0.4 4.6 Z" fill="#a8751a"/><path d="M6.5 4.6 H10 M8 5 V11 H9" stroke="#c08a2c" stroke-width="1.3" fill="none"/><path d="M11.6 2.6 L14 5.2 L11.6 7.8 L9.2 5.2 Z" fill="#fff" stroke="#c08a2c" stroke-width="1.3"/><path d="M10.8 8.2 L13.2 10.8 L10.8 13.4 L8.4 10.8 Z" fill="#fff" stroke="#c08a2c" stroke-width="1.3"/></svg>
<div class="abs" style="left:57px;top:317px;width:73px;height:19px;background:#eeeff2"></div>
<div class="tree-row" style="left:59px;top:317px;letter-spacing:-0.157px;">CSelectView</div>
<svg class="abs" style="left:25px;top:342px" width="6" height="10" viewBox="0 0 6 10" ><path d="M0.6 0.8 L5.2 5 L0.6 9.2 Z" fill="none" stroke="#2b2b2b" stroke-width="1"/></svg>
<svg class="abs" style="left:38px;top:339px" width="15" height="14" viewBox="0 0 15 14" ><path d="M4.2 0.3 L8.2 3.2 L5.2 7.6 L0.4 4.6 Z" fill="#a8751a"/><path d="M6.5 4.6 H10 M8 5 V11 H9" stroke="#c08a2c" stroke-width="1.3" fill="none"/><path d="M11.6 2.6 L14 5.2 L11.6 7.8 L9.2 5.2 Z" fill="#fff" stroke="#c08a2c" stroke-width="1.3"/><path d="M10.8 8.2 L13.2 10.8 L10.8 13.4 L8.4 10.8 Z" fill="#fff" stroke="#c08a2c" stroke-width="1.3"/></svg>
<div class="tree-row" style="left:59px;top:337px;letter-spacing:0.162px;">CUserDlg</div>
<svg class="abs" style="left:39px;top:363px" width="13" height="10" viewBox="0 0 13 10" ><rect x="0" y="0" width="13" height="3" fill="#00539c"/><rect x="1" y="6" width="4" height="4" fill="#00539c"/><rect x="8" y="6" width="4" height="4" fill="#00539c"/></svg>
<div class="tree-row" style="left:59px;top:357px;letter-spacing:0.126px;">msg</div>
<div class="abs" style="left:0;top:427px;width:334px;height:4px;background:#5d6b99"></div>
<svg class="abs" style="left:19px;top:433px" width="16" height="16" viewBox="0 0 16 16" ><path d="M7 1 L11.4 3.3 V8.3 L7 10.6 L2.6 8.3 V3.3 Z M2.6 3.3 L7 5.7 L11.4 3.3 M7 5.7 V10.6" fill="none" stroke="#7a4fa3" stroke-width="1.15" stroke-linejoin="round"/><path d="M0.6 12.8 H5.2 M3.6 11.0 L5.4 12.8 L3.6 14.600000000000001" stroke="#fff" stroke-width="2.4" fill="none"/><path d="M1 12.8 H5.2 M3.6 11.0 L5.4 12.8 L3.6 14.600000000000001" stroke="#424242" stroke-width="1" fill="none"/><path d="M12.3 10.6 L13 12.3 L14.9 12.4 L13.4 13.5 L13.9 15.3 L12.3 14.3 L10.7 15.3 L11.2 13.5 L9.7 12.4 L11.6 12.3 Z" fill="#2b2b2b"/></svg>
<div class="tree-row" style="left:40px;top:431px;letter-spacing:-0.03px;">~CSelectView()</div>
<svg class="abs" style="left:19px;top:455px" width="16" height="16" viewBox="0 0 16 16" ><path d="M7 1 L11.4 3.3 V8.3 L7 10.6 L2.6 8.3 V3.3 Z M2.6 3.3 L7 5.7 L11.4 3.3 M7 5.7 V10.6" fill="none" stroke="#7a4fa3" stroke-width="1.15" stroke-linejoin="round"/><path d="M0.6 11.6 H5.2 M3.6 9.799999999999999 L5.4 11.6 L3.6 13.4" stroke="#fff" stroke-width="2.4" fill="none"/><path d="M1 11.6 H5.2 M3.6 9.799999999999999 L5.4 11.6 L3.6 13.4" stroke="#424242" stroke-width="1" fill="none"/></svg>
<div class="tree-row" style="left:40px;top:451px;letter-spacing:0.223px;">AssertValid() const</div>
<svg class="abs" style="left:19px;top:473px" width="16" height="16" viewBox="0 0 16 16" ><path d="M7 1 L11.4 3.3 V8.3 L7 10.6 L2.6 8.3 V3.3 Z M2.6 3.3 L7 5.7 L11.4 3.3 M7 5.7 V10.6" fill="none" stroke="#7a4fa3" stroke-width="1.15" stroke-linejoin="round"/><path d="M0.6 12.8 H5.2 M3.6 11.0 L5.4 12.8 L3.6 14.600000000000001" stroke="#fff" stroke-width="2.4" fill="none"/><path d="M1 12.8 H5.2 M3.6 11.0 L5.4 12.8 L3.6 14.600000000000001" stroke="#424242" stroke-width="1" fill="none"/><path d="M12.3 10.6 L13 12.3 L14.9 12.4 L13.4 13.5 L13.9 15.3 L12.3 14.3 L10.7 15.3 L11.2 13.5 L9.7 12.4 L11.6 12.3 Z" fill="#2b2b2b"/></svg>
<div class="tree-row" style="left:40px;top:471px;letter-spacing:-0.145px;">CSelectView()</div>
<svg class="abs" style="left:19px;top:495px" width="16" height="16" viewBox="0 0 16 16" ><path d="M7 1 L11.4 3.3 V8.3 L7 10.6 L2.6 8.3 V3.3 Z M2.6 3.3 L7 5.7 L11.4 3.3 M7 5.7 V10.6" fill="none" stroke="#7a4fa3" stroke-width="1.15" stroke-linejoin="round"/><path d="M0.6 11.6 H5.2 M3.6 9.799999999999999 L5.4 11.6 L3.6 13.4" stroke="#fff" stroke-width="2.4" fill="none"/><path d="M1 11.6 H5.2 M3.6 9.799999999999999 L5.4 11.6 L3.6 13.4" stroke="#424242" stroke-width="1" fill="none"/></svg>
<div class="tree-row" style="left:40px;top:491px;letter-spacing:0.306px;">Dump(CDumpContext &amp; dc) const</div>
<svg class="abs" style="left:19px;top:515px" width="16" height="16" viewBox="0 0 16 16" ><path d="M7 1 L11.4 3.3 V8.3 L7 10.6 L2.6 8.3 V3.3 Z M2.6 3.3 L7 5.7 L11.4 3.3 M7 5.7 V10.6" fill="none" stroke="#7a4fa3" stroke-width="1.15" stroke-linejoin="round"/><path d="M0.6 11.6 H5.2 M3.6 9.799999999999999 L5.4 11.6 L3.6 13.4" stroke="#fff" stroke-width="2.4" fill="none"/><path d="M1 11.6 H5.2 M3.6 9.799999999999999 L5.4 11.6 L3.6 13.4" stroke="#424242" stroke-width="1" fill="none"/></svg>
<div class="tree-row" style="left:40px;top:511px;letter-spacing:0.237px;">OnInitialUpdate()</div>
<svg class="abs" style="left:19px;top:535px" width="16" height="16" viewBox="0 0 16 16" ><path d="M7 1 L11.4 3.3 V8.3 L7 10.6 L2.6 8.3 V3.3 Z M2.6 3.3 L7 5.7 L11.4 3.3 M7 5.7 V10.6" fill="none" stroke="#7a4fa3" stroke-width="1.15" stroke-linejoin="round"/><path d="M0.6 11.6 H5.2 M3.6 9.799999999999999 L5.4 11.6 L3.6 13.4" stroke="#fff" stroke-width="2.4" fill="none"/><path d="M1 11.6 H5.2 M3.6 9.799999999999999 L5.4 11.6 L3.6 13.4" stroke="#424242" stroke-width="1" fill="none"/></svg>
<div class="tree-row" style="left:40px;top:531px;letter-spacing:0.064px;">OnTvnSelchanged(NMHDR * pNMHDR, LRESULT *</div>
<svg class="abs" style="left:20px;top:553px" width="16" height="16" viewBox="0 0 16 16" ><path d="M0.5 3.5 L6 0.8 L11 3.2 V7 L5.5 9.8 L0.5 7.2 Z" fill="#00539c"/><path d="M0.8 3.6 L5.6 6 L10.8 3.4" stroke="#fff" stroke-width="0.8" fill="none"/><rect x="9.6" y="11.4" width="4.6" height="3.6" fill="#2b2b2b"/><path d="M10.6 11.4 V10.6 C10.6 9.2 13.2 9.2 13.2 10.6 V11.4" stroke="#2b2b2b" stroke-width="1" fill="none"/><rect x="11.4" y="12.6" width="1" height="1.3" fill="#fff"/></svg>
<div class="tree-row" style="left:40px;top:551px;letter-spacing:-0.023px;">m_imageList</div>
<svg class="abs" style="left:20px;top:573px" width="16" height="16" viewBox="0 0 16 16" ><path d="M0.5 3.5 L6 0.8 L11 3.2 V7 L5.5 9.8 L0.5 7.2 Z" fill="#00539c"/><path d="M0.8 3.6 L5.6 6 L10.8 3.4" stroke="#fff" stroke-width="0.8" fill="none"/><rect x="9.6" y="11.4" width="4.6" height="3.6" fill="#2b2b2b"/><path d="M10.6 11.4 V10.6 C10.6 9.2 13.2 9.2 13.2 10.6 V11.4" stroke="#2b2b2b" stroke-width="1" fill="none"/><rect x="11.4" y="12.6" width="1" height="1.3" fill="#fff"/></svg>
<div class="tree-row" style="left:40px;top:571px;letter-spacing:0.046px;">m_treeCtrl</div>
<div class="abs" style="left:0;top:643px;width:334px;height:17px;background:#e8e8ec"></div>
<svg class="abs" style="left:6px;top:646px" width="6" height="10" viewBox="0 0 6 10" ><path d="M5.5 0 V10 L0 5 Z" fill="#868999"/></svg>
<svg class="abs" style="left:322px;top:646px" width="6" height="10" viewBox="0 0 6 10" ><path d="M0.5 0 V10 L6 5 Z" fill="#868999"/></svg>
<div class="abs" style="left:17px;top:647px;width:256px;height:9px;background:#c2c5d0"></div>
</div>
<div class="abs" style="left:25px;top:734px;width:117px;height:18px;background:#4d6094;color:#e3e9f8;line-height:18px;text-align:center;white-space:pre">解决方案资源管理器</div>
<div class="abs" style="left:146px;top:734px;width:53px;height:18px;background:#4d6094;color:#e3e9f8;line-height:18px;text-align:center;white-space:pre">Git 更改</div>
<div class="abs" style="left:201px;top:733px;width:46px;height:20px;background:#f5f7fc;color:#1e1e1e;line-height:20px;text-align:center;white-space:pre">类视图</div>
<div class="abs" style="left:249px;top:734px;width:58px;height:18px;background:#4d6094;color:#e3e9f8;line-height:18px;text-align:center;white-space:pre">资源视图</div>
<div class="abs" style="left:367px;top:72px;width:130px;height:22px;background:#ccd5f0"></div>
<div class="t" style="left:371px;top:77px;color:#1e1e1e;font-size:12.2px">CSelectView.h</div>
<svg class="abs" style="left:462px;top:79px" width="9" height="8" viewBox="0 0 9 8" ><path d="M0 4 H4 M4 1 V7 M4.5 2 H8.5 M4.5 6 H8.5 M8.5 0.5 V7.5" stroke="#5a6a94" stroke-width="1" fill="none"/></svg>
<svg class="abs" style="left:480px;top:78px" width="9" height="9" viewBox="0 0 9 9" ><path d="M0.5 0.5 L8.5 8.5 M8.5 0.5 L0.5 8.5" stroke="#5a6a94" stroke-width="1.3"/></svg>
<div class="abs" style="left:497px;top:73px;width:128px;height:19px;background:#3b4f81;color:#fff;line-height:21px;padding-left:5px;font-size:12.8px;white-space:pre;overflow:hidden">MainFrm.cpp</div>
<div class="abs" style="left:627px;top:73px;width:114px;height:19px;background:#3b4f81;color:#fff;line-height:21px;padding-left:5px;font-size:12.8px;white-space:pre;overflow:hidden">MainFrm.h</div>
<div class="abs" style="left:741px;top:73px;width:124px;height:19px;background:#3b4f81;color:#fff;line-height:21px;padding-left:5px;font-size:12.8px;white-space:pre;overflow:hidden">framework.h</div>
<svg class="abs" style="left:882px;top:79px" width="9" height="8" viewBox="0 0 9 8" ><rect x="0" y="0" width="9" height="2" fill="#dfe5f5"/><path d="M0 3.5 H9 L4.5 8 Z" fill="#dfe5f5"/></svg>
<svg class="abs" style="left:899px;top:77px" width="11" height="11" viewBox="0 0 14 14" ><g transform="translate(7,7)"><rect x="-1.6" y="-7" width="3.2" height="4" fill="#dfe5f5" transform="rotate(0)"/><rect x="-1.6" y="-7" width="3.2" height="4" fill="#dfe5f5" transform="rotate(45)"/><rect x="-1.6" y="-7" width="3.2" height="4" fill="#dfe5f5" transform="rotate(90)"/><rect x="-1.6" y="-7" width="3.2" height="4" fill="#dfe5f5" transform="rotate(135)"/><rect x="-1.6" y="-7" width="3.2" height="4" fill="#dfe5f5" transform="rotate(180)"/><rect x="-1.6" y="-7" width="3.2" height="4" fill="#dfe5f5" transform="rotate(225)"/><rect x="-1.6" y="-7" width="3.2" height="4" fill="#dfe5f5" transform="rotate(270)"/><rect x="-1.6" y="-7" width="3.2" height="4" fill="#dfe5f5" transform="rotate(315)"/><circle r="4.8" fill="#dfe5f5"/><circle r="2" fill="#5d6b99"/></g></svg>
<div class="abs" style="left:367px;top:92px;width:544px;height:4px;background:#ccd5f0"></div>
<div class="abs" style="left:367px;top:95px;width:544px;height:22px;background:#f0f3fb;border-bottom:1px solid #9aa3bf"></div>
<div class="abs" style="left:540px;top:95px;width:3px;height:21px;background:#b4c0e4"></div>
<div class="abs" style="left:716px;top:95px;width:3px;height:21px;background:#b4c0e4"></div>
<div class="abs" style="left:892px;top:95px;width:1px;height:21px;background:#b4c0e4"></div>
<svg class="abs" style="left:371px;top:99px" width="13" height="13" viewBox="0 0 14 14" ><rect x="0.5" y="0.5" width="13" height="13" fill="#fff" stroke="#9b4f96"/><path d="M4.5 1.8 V7.6 M1.8 4.6 H7.4 M8.6 5.8 V12 M5.6 8.9 H11.8" stroke="#2b2b2b" stroke-width="2.2"/></svg>
<div class="t" style="left:388px;top:99px">SaleSystem</div>
<svg class="abs" style="left:530px;top:104px" width="6" height="3.0" viewBox="0 0 6 3.0" ><path d="M0 0 H6 L3.0 3.0 Z" fill="#1e1e1e"/></svg>
<div class="t" style="left:564px;top:99px">(全局范围)</div>
<svg class="abs" style="left:706px;top:104px" width="6" height="3.0" viewBox="0 0 6 3.0" ><path d="M0 0 H6 L3.0 3.0 Z" fill="#1e1e1e"/></svg>
<svg class="abs" style="left:884px;top:104px" width="6" height="3.0" viewBox="0 0 6 3.0" ><path d="M0 0 H6 L3.0 3.0 Z" fill="#1e1e1e"/></svg>
<svg class="abs" style="left:895px;top:98px" width="13" height="15" viewBox="0 0 13 15" ><path d="M0 7.5 H13 M1.5 5 H11.5 M1.5 10 H11.5 M6.5 0 V4 M6.5 15 V11 M4.5 2.5 L6.5 4.5 L8.5 2.5 M4.5 12.5 L6.5 10.5 L8.5 12.5" stroke="#2b2b2b" stroke-width="1.1" fill="none"/></svg>
<div class="abs code" style="left:367px;top:117px;width:544px;height:619px;background:#fff;overflow:hidden">
<div class="abs" style="left:0;top:0;width:17px;height:619px;background:#e6e7e8"></div>
<div class="abs" style="left:0;top:0;width:525px;height:619px;overflow:hidden">
<div class="abs" style="left:90px;top:513px;width:435px;height:15px;border:1px solid #e4e4e9"></div>
<div class="ln" style="left:17px;top:1px">1</div>
<div class="cl" style="left:91px;top:1px"><span class="pp">#pragma once</span></div>
<div class="ln" style="left:17px;top:17px">2</div>
<div class="ln" style="left:17px;top:33px">3</div>
<div class="cl" style="left:91px;top:33px"><span class="cm">//#include "afxcview.h"</span></div>
<div class="ln" style="left:17px;top:49px">4</div>
<div class="cl" style="left:91px;top:49px"><span class="cm">// CSelectView <span class="cj">视图</span></span></div>
<div class="ln" style="left:17px;top:65px">5</div>
<div class="ln" style="left:17px;top:81px">6</div>
<div class="cl" style="left:91px;top:81px"><span class="k">class</span> <span class="ty">CSelectView</span> : <span class="k">public</span> <span class="ty">CTreeView</span></div>
<div class="ln" style="left:17px;top:97px">7</div>
<div class="cl" style="left:91px;top:97px">{</div>
<div class="ln" style="left:17px;top:113px">8</div>
<div class="cl" style="left:91px;top:113px">    <span class="mc">DECLARE_DYNCREATE</span>(<span class="ty">CSelectView</span>)</div>
<div class="ln" style="left:17px;top:129px">9</div>
<div class="ln" style="left:17px;top:145px">10</div>
<div class="cl" style="left:91px;top:145px"><span class="k">protected</span>:</div>
<div class="ln" style="left:17px;top:161px">11</div>
<div class="cl" style="left:91px;top:161px">    <span class="fn">CSelectView</span>();           <span class="cm">// <span class="cj">动态创建所使用的受保护的构造函</span></span></div>
<div class="ln" style="left:17px;top:177px">12</div>
<div class="cl" style="left:91px;top:177px">    <span class="k">virtual</span> <span class="fn">~CSelectView</span>();</div>
<div class="ln" style="left:17px;top:193px">13</div>
<div class="ln" style="left:17px;top:209px">14</div>
<div class="cl" style="left:91px;top:209px"><span class="k">public</span>:</div>
<div class="ln" style="left:17px;top:225px">15</div>
<div class="cl" style="left:91px;top:225px"><span class="pp">#ifdef</span> <span class="mc">_DEBUG</span></div>
<div class="ln" style="left:17px;top:241px">16</div>
<div class="cl" style="left:91px;top:241px">    <span class="k">virtual</span> <span class="k">void</span> <span class="fn">AssertValid</span>() <span class="k">const</span>;</div>
<div class="ln" style="left:17px;top:257px">17</div>
<div class="cl" style="left:91px;top:257px"><span class="pp">#ifndef</span> _WIN32_WCE</div>
<div class="ln" style="left:17px;top:273px">18</div>
<div class="cl" style="left:91px;top:273px">    <span class="k">virtual</span> <span class="k">void</span> <span class="fn">Dump</span>(<span class="ty">CDumpContext</span>&amp; <span class="pr">dc</span>) <span class="k">const</span>;</div>
<div class="ln" style="left:17px;top:289px">19</div>
<div class="cl" style="left:91px;top:289px"><span class="pp">#endif</span></div>
<div class="ln" style="left:17px;top:305px">20</div>
<div class="cl" style="left:91px;top:305px"><span class="pp">#endif</span></div>
<div class="ln" style="left:17px;top:321px">21</div>
<div class="ln" style="left:17px;top:337px">22</div>
<div class="cl" style="left:91px;top:337px"><span class="k">protected</span>:</div>
<div class="ln" style="left:17px;top:353px">23</div>
<div class="cl" style="left:91px;top:353px">    <span class="mc">DECLARE_MESSAGE_MAP</span>()</div>
<div class="ln" style="left:17px;top:369px">24</div>
<div class="ln" style="left:17px;top:385px">25</div>
<div class="cl" style="left:91px;top:385px"><span class="k">private</span>:</div>
<div class="ln" style="left:17px;top:401px">26</div>
<div class="cl" style="left:91px;top:401px">    <span class="ty">CTreeCtrl</span>* m_treeCtrl;<span class="cm">//<span class="cj">树控件</span></span></div>
<div class="ln" style="left:17px;top:417px">27</div>
<div class="cl" style="left:91px;top:417px">    <span class="ty">CImageList</span> m_imageList;<span class="cm">//<span class="cj">图标列表</span></span></div>
<div class="ln" style="left:17px;top:433px">28</div>
<div class="ln" style="left:17px;top:449px">29</div>
<div class="cl" style="left:91px;top:449px"><span class="k">public</span>:</div>
<div class="ln" style="left:17px;top:465px">30</div>
<div class="cl" style="left:91px;top:465px">    <span class="k">virtual</span> <span class="k">void</span> <span class="fn">OnInitialUpdate</span>();</div>
<div class="ln" style="left:17px;top:481px">31</div>
<div class="cl" style="left:91px;top:481px">    <span class="mc">afx_msg</span> <span class="k">void</span> <span class="fn">OnTvnSelchanged</span>(<span class="ty">NMHDR</span>* <span class="pr">pNMHDR</span>, <span class="ty">LRESULT</span>* <span class="pr">pResult</span>);</div>
<div class="ln" style="left:17px;top:497px">32</div>
<div class="cl" style="left:91px;top:497px">};</div>
<div class="ln" style="left:17px;top:513px">33</div>
<div class="ln" style="left:17px;top:529px">34</div>
<div class="ln" style="left:17px;top:545px">35</div>
<div class="abs" style="left:84px;top:45px;width:1px;height:15px;background:#a5a5a5"></div><div class="abs" style="left:84px;top:60px;width:4px;height:1px;background:#a5a5a5"></div>
<div class="abs" style="left:84px;top:93px;width:1px;height:415px;background:#a5a5a5"></div><div class="abs" style="left:84px;top:508px;width:4px;height:1px;background:#a5a5a5"></div>
<div class="abs" style="left:80px;top:36px;width:9px;height:9px;border:1px solid #999;background:#fff"></div><div class="abs" style="left:82px;top:40px;width:5px;height:1px;background:#555"></div>
<div class="abs" style="left:80px;top:84px;width:9px;height:9px;border:1px solid #999;background:#fff"></div><div class="abs" style="left:82px;top:88px;width:5px;height:1px;background:#555"></div>
<div class="abs" style="left:80px;top:228px;width:9px;height:9px;border:1px solid #999;background:#fff"></div><div class="abs" style="left:82px;top:232px;width:5px;height:1px;background:#555"></div>
<div class="abs" style="left:80px;top:260px;width:9px;height:9px;border:1px solid #999;background:#fff"></div><div class="abs" style="left:82px;top:264px;width:5px;height:1px;background:#555"></div>
<div class="abs" style="left:95px;top:96px;width:0;height:112px;border-left:1px dashed #d0d0d0"></div>
<div class="abs" style="left:95px;top:240px;width:0;height:16px;border-left:1px dashed #d0d0d0"></div>
<div class="abs" style="left:95px;top:272px;width:0;height:16px;border-left:1px dashed #d0d0d0"></div>
<div class="abs" style="left:95px;top:320px;width:0;height:176px;border-left:1px dashed #d0d0d0"></div>
</div>
<div class="abs" style="left:526px;top:0;width:18px;height:619px;background:#e8e8ec"></div>
<svg class="abs" style="left:530px;top:6px" width="10" height="5" viewBox="0 0 10 5" ><path d="M0 5 H10 L5 0 Z" fill="#868999"/></svg>
<svg class="abs" style="left:530px;top:608px" width="10" height="5" viewBox="0 0 10 5" ><path d="M0 0 H10 L5 5 Z" fill="#868999"/></svg>
<div class="abs" style="left:529px;top:17px;width:11px;height:306px;background:#c2c3c9"></div>
<div class="abs" style="left:526px;top:273px;width:18px;height:2px;background:#0000a8"></div>
</div>
<div class="abs" style="left:367px;top:736px;width:544px;height:18px;background:#eeeef2"></div>
<div class="abs" style="left:367px;top:737px;width:59px;height:16px;background:#fff"></div>
<div class="t" style="left:369px;top:738px;font-size:11.5px">100 %</div>
<svg class="abs" style="left:417px;top:743px" width="6" height="3.0" viewBox="0 0 6 3.0" ><path d="M0 0 H6 L3.0 3.0 Z" fill="#1e1e1e"/></svg>
<svg class="abs" style="left:451px;top:739px" width="10" height="10" viewBox="0 0 10 10" ><circle cx="5" cy="5" r="4.6" fill="#3c9a3c"/><path d="M2.7 5.2 L4.4 6.8 L7.4 3.4" stroke="#fff" stroke-width="1.3" fill="none"/></svg>
<div class="t" style="left:466px;top:738px;font-size:11.5px">未找到相关问题</div>
<svg class="abs" style="left:628px;top:740px" width="5" height="9" viewBox="0 0 5 9" ><path d="M5 0 V9 L0 4.5 Z" fill="#868999"/></svg>
<div class="abs" style="left:640px;top:740px;width:28px;height:9px;background:#c2c3c9"></div>
<svg class="abs" style="left:689px;top:740px" width="5" height="9" viewBox="0 0 5 9" ><path d="M0 0 V9 L5 4.5 Z" fill="#868999"/></svg>
<div class="t" style="left:722px;top:738px;font-size:11.5px">行: 33</div>
<div class="t" style="left:769px;top:738px;font-size:11.5px">字符: 1</div>
<div class="t" style="left:822px;top:738px;font-size:11.5px">制表符</div>
<div class="t" style="left:875px;top:738px;font-size:11.5px;letter-spacing:-0.5px">CRLF</div>
<div class="panel-title" style="left:25px;top:762px;width:887px;height:23px;line-height:23px">命令窗口</div>
<svg class="abs" style="left:859px;top:771px" width="8" height="4.0" viewBox="0 0 8 4.0" ><path d="M0 0 H8 L4.0 4.0 Z" fill="#d6dcf0"/></svg>
<svg class="abs" style="left:876px;top:768px" width="9" height="11" viewBox="0 0 9 11" ><path d="M2 0.5 H7 M2.5 0.5 V6 M6.5 0.5 V6 M5.5 0.5 V6 M0.5 6.5 H8.5 M4.5 6.5 V11" fill="none" stroke="#e8ecf8" stroke-width="1"/></svg>
<svg class="abs" style="left:893px;top:769px" width="9" height="9" viewBox="0 0 9 9" ><path d="M0.5 0.5 L8.5 8.5 M8.5 0.5 L0.5 8.5" stroke="#e8ecf8" stroke-width="1.3"/></svg>
<div class="abs" style="left:25px;top:785px;width:887px;height:141px;background:#e6e7e8"></div>
<div class="t" style="left:27px;top:785px;color:#1e1e1e;font-size:14px;line-height:16px;transform:scaleX(0.8);transform-origin:0 0">&gt;</div>
<div class="abs" style="left:893px;top:785px;width:19px;height:141px;background:#e8e8ec"></div>
<svg class="abs" style="left:897px;top:787px" width="10" height="5" viewBox="0 0 10 5" ><path d="M0 5 H10 L5 0 Z" fill="#868999"/></svg>
<div class="abs" style="left:893px;top:799px;width:19px;height:2px;background:#0000a8"></div>
<div class="abs" style="left:897px;top:803px;width:10px;height:85px;background:#c2c3c9"></div>
<svg class="abs" style="left:897px;top:904px" width="10" height="5" viewBox="0 0 10 5" ><path d="M0 0 H10 L5 5 Z" fill="#868999"/></svg>
<svg class="abs" style="left:31px;top:915px" width="5" height="8" viewBox="0 0 5 8" ><path d="M5 0 V8 L0 4 Z" fill="#c2c5d0"/></svg>
<svg class="abs" style="left:882px;top:915px" width="5" height="8" viewBox="0 0 5 8" ><path d="M0 0 V8 L5 4 Z" fill="#c2c5d0"/></svg>
<div class="abs" style="left:919px;top:73px;width:346px;height:853px;background:#f7f9fe;overflow:hidden">
<div class="abs" style="left:0;top:0;width:346px;height:23px;background:#f5cc84"></div>
<div class="t" style="left:4px;top:5px;color:#1e1e1e">属性</div>
<svg class="abs" style="left:293px;top:10px" width="8" height="4.0" viewBox="0 0 8 4.0" ><path d="M0 0 H8 L4.0 4.0 Z" fill="#6b4a0b"/></svg>
<svg class="abs" style="left:311px;top:6px" width="9" height="11" viewBox="0 0 9 11" ><path d="M2 0.5 H7 M2.5 0.5 V6 M6.5 0.5 V6 M5.5 0.5 V6 M0.5 6.5 H8.5 M4.5 6.5 V11" fill="none" stroke="#6b4a0b" stroke-width="1"/></svg>
<svg class="abs" style="left:328px;top:7px" width="9" height="9" viewBox="0 0 9 9" ><path d="M0.5 0.5 L8.5 8.5 M8.5 0.5 L0.5 8.5" stroke="#6b4a0b" stroke-width="1.3"/></svg>
<div class="abs" style="left:0;top:23px;width:346px;height:25px;background:#fdfdff"></div>
<div class="t" style="left:6px;top:27px;font-size:12.3px;line-height:15px"><b>CSelectView</b>  VCCodeClass</div>
<svg class="abs" style="left:337px;top:34px" width="6" height="3.0" viewBox="0 0 6 3.0" ><path d="M0 0 H6 L3.0 3.0 Z" fill="#1e1e1e"/></svg>
<div class="abs" style="left:0;top:48px;width:346px;height:25px;background:#ccd5f0"></div>
<div class="abs" style="left:3px;top:49px;width:23px;height:22px;background:#fcebc6;border:1px solid #b59a4c"></div>
<svg class="abs" style="left:7px;top:53px" width="15" height="14" viewBox="0 0 15 14" ><rect x="0.8" y="0.8" width="4.8" height="4.8" fill="#2b2b2b"/><rect x="0.8" y="8.4" width="4.8" height="4.8" fill="#2b2b2b"/><path d="M2 3.2 H4.4 M3.2 2 V4.4 M2 10.8 H4.4" stroke="#fcebc6" stroke-width="1"/><path d="M7 1 H14 M7 3.5 H15 M7 6 H13 M7 8.5 H14 M7 11 H15 M7 13.5 H12 M14 13.5 H15" stroke="#2b2b2b" stroke-width="1"/></svg>
<div class="abs" style="left:30px;top:52px;width:7px;height:7px;background:#424242"></div>
<div class="t" style="left:30.5px;top:52px;font-size:7.5px;font-weight:bold;color:#dfe5f5;line-height:7px;height:7px">A</div>
<div class="t" style="left:30.5px;top:60px;font-size:8.5px;font-weight:bold;color:#2b2b2b;line-height:8px;height:8px">Z</div>
<svg class="abs" style="left:38px;top:55px" width="7" height="10" viewBox="0 0 7 10" ><path d="M3.5 0 V8 M0.6 5 L3.5 8.6 L6.4 5" stroke="#00539c" stroke-width="2" fill="none"/></svg>
<div class="sep" style="left:52px;top:51px;height:20px"></div>
<svg class="abs" style="left:59px;top:52px" width="14" height="16" viewBox="0 0 14 16" ><path d="M4.5 1.5 H10 L13.5 5 V15.5 H4.5 Z" fill="#dadada" stroke="#424242"/><path d="M10 1.5 V5 H13.5" fill="none" stroke="#424242"/><path d="M1.2 3 C0 5 1 7.4 3 7.9 V14 H5.2 V7.9 C7.2 7.4 8.2 5 7 3 V5.8 H5.4 V3 H2.8 V5.8 H1.2 Z" fill="#1e1e1e"/></svg>
<svg class="abs" style="left:83px;top:53px" width="12" height="15" viewBox="0 0 12 15" ><path d="M7.5 0.5 L1.5 7 H5.5 L2.5 14 L10.5 5.5 H6.5 L10.5 0.5 Z" fill="#ffe000" stroke="#1e1e1e" stroke-width="1.1" stroke-linejoin="round"/></svg>
<svg class="abs" style="left:104px;top:53px" width="16" height="15" viewBox="0 0 16 15" ><rect x="0.5" y="4.5" width="5.5" height="8" fill="none" stroke="#2b2b2b"/><rect x="8.5" y="6.5" width="6" height="7" fill="none" stroke="#2b2b2b"/><path d="M10 0 H16 L13 4 Z" fill="#2b2b2b"/></svg>
<div class="abs" style="left:124px;top:49px;width:23px;height:22px;background:#fcebc6;border:1px solid #b59a4c"></div>
<svg class="abs" style="left:131px;top:55px" width="9" height="10" viewBox="0 0 9 10" ><path d="M4.5 0.4 L8.6 4.2 L4.5 9.6 L0.4 4.2 Z" fill="#2e6b34" stroke="#14301a" stroke-width="0.8"/><path d="M1.5 3 L7 7 M2.5 2 L8 5.6 M1 5.5 L5.5 8.6 M4.5 0.5 L2 7 M6.5 2.2 L3.5 8.4" stroke="#9cc79f" stroke-width="0.45"/></svg>
<div class="sep" style="left:150px;top:51px;height:20px"></div>
<svg class="abs" style="left:156px;top:52px" width="16" height="16" viewBox="0 0 16 16" ><path d="M15.2 3.6 C15.8 7 13 9.6 9.8 8.6 L4 15 C2.2 16.6 -0.4 14.2 1.2 12.4 L7.4 6.4 C6.4 3 9.2 0 12.8 0.8 L10.2 3.6 L12.4 5.8 Z" fill="#9d9fa8"/></svg>
<div class="abs" style="left:0;top:73px;width:346px;height:2px;background:#eef1f9"></div>
<div class="abs" style="left:0;top:75px;width:15px;height:741px;background:#eff2fa"></div>
<div class="prow" style="top:75px"><span style="letter-spacing:0.005px">get_accDescription</span></div>
<div class="prow" style="top:94px"><span style="letter-spacing:-0.358px">get_accFocus</span></div>
<div class="prow" style="top:113px"><span style="letter-spacing:-0.157px">get_accHelp</span></div>
<div class="prow" style="top:132px"><span style="letter-spacing:0.071px">get_accHelpTopic</span></div>
<div class="prow" style="top:151px"><span style="letter-spacing:0.035px">get_accKeyboardShortcut</span></div>
<div class="prow" style="top:170px"><span style="letter-spacing:-0.098px">get_accName</span></div>
<div class="prow" style="top:189px"><span style="letter-spacing:-0.194px">get_accParent</span></div>
<div class="prow" style="top:208px"><span style="letter-spacing:-0.23px">get_accRole</span></div>
<div class="prow" style="top:227px"><span style="letter-spacing:-0.178px">get_accSelection</span></div>
<div class="prow" style="top:246px"><span style="letter-spacing:-0.255px">get_accState</span></div>
<div class="prow" style="top:265px"><span style="letter-spacing:-0.179px">get_accValue</span></div>
<div class="prow" style="top:284px"><span style="letter-spacing:0.204px">GetInterfaceHook</span></div>
<div class="prow" style="top:303px"><span style="letter-spacing:-0.041px">GetScrollBarCtrl</span></div>
<div class="prow" style="top:322px"><span style="">HtmlHelp</span></div>
<div class="prow" style="top:341px"><span style="">IsInvokeAllowed</span></div>
<div class="prow" style="top:360px"><span style="">IsSelected</span></div>
<div class="prow" style="top:379px"><span style="">OnActivateFrame</span></div>
<div class="prow" style="top:398px"><span style="">OnActivateView</span></div>
<div class="prow" style="top:417px"><span style="">OnAmbientProperty</span></div>
<div class="prow" style="top:436px"><span style="">OnBeginPrinting</span></div>
<div class="prow" style="top:455px"><span style="">OnChildNotify</span></div>
<div class="prow" style="top:474px"><span style="">OnCmdMsg</span></div>
<div class="prow" style="top:493px"><span style="">OnCommand</span></div>
<div class="prow" style="top:512px"><span style="">OnCreateAggregates</span></div>
<div class="prow" style="top:531px"><span style="">OnDragEnter</span></div>
<div class="prow" style="top:550px"><span style="">OnDragLeave</span></div>
<div class="prow" style="top:569px"><span style="">OnDragOver</span></div>
<div class="prow" style="top:588px"><span style="">OnDraw</span></div>
<div class="prow" style="top:607px"><span style="">OnDrop</span></div>
<div class="prow" style="top:626px"><span style="">OnEndPrinting</span></div>
<div class="prow" style="top:645px"><span style="">OnEndPrintPreview</span></div>
<div class="prow" style="top:664px"><span style="">OnFinalRelease</span></div>
<div class="prow" style="top:683px"><div class="abs" style="left:0;top:0;width:152px;height:18px;background:#0078d7"></div><span style="color:#fff;letter-spacing:0.169px">OnInitialUpdate</span><span style="left:156px;letter-spacing:0.169px">OnInitialUpdate</span></div>
<div class="abs" style="left:311px;top:683px;width:17px;height:18px;background:#e1e1e1;border:1px solid #adadad"></div>
<svg class="abs" style="left:315px;top:689px" width="9" height="5" viewBox="0 0 9 5" ><path d="M0.5 0.5 L4.5 4.5 L8.5 0.5" fill="none" stroke="#333" stroke-width="1.1"/></svg>
<div class="prow" style="top:702px"><span style="">OnNotify</span></div>
<div class="prow" style="top:721px"><span style="">OnPrepareDC</span></div>
<div class="prow" style="top:740px"><span style="">OnPreparePrinting</span></div>
<div class="prow" style="top:759px"><span style="">OnPrint</span></div>
<div class="prow" style="top:778px"><span style="">OnScroll</span></div>
<div class="prow" style="top:797px"><span style="">OnScrollBy</span></div>
<div class="abs" style="left:167px;top:75px;width:1px;height:741px;background:#eceef5"></div>
<div class="abs" style="left:329px;top:75px;width:17px;height:741px;background:#e8e8ec"></div>
<svg class="abs" style="left:332px;top:81px" width="10" height="5" viewBox="0 0 10 5" ><path d="M0 5 H10 L5 0 Z" fill="#868999"/></svg>
<svg class="abs" style="left:332px;top:805px" width="10" height="5" viewBox="0 0 10 5" ><path d="M0 0 H10 L5 5 Z" fill="#868999"/></svg>
<div class="abs" style="left:332px;top:281px;width:9px;height:412px;background:#c2c3c9"></div>
<div class="abs" style="left:0;top:816px;width:346px;height:37px;background:#f7f9fe;border-top:1px solid #e3e6f0"></div>
<div class="t" style="left:6px;top:824px;font-weight:bold;font-size:13.2px;line-height:15px">OnInitialUpdate</div>
<div class="t" style="left:6px;top:844px;font-size:12px">在第一个视图附加到文档之后调用</div>
</div>
<svg class="abs" style="left:0;top:0;pointer-events:none" width="1272" height="926" viewBox="0 0 1272 926">
<polygon points="170.7,402.4 260.0,365.9 356.8,326.5 453.5,286.8 728.2,172.7 913.7,95.5 913.7,99.3 924.0,86.3 907.5,84.5 910.3,87.2 725.1,165.3 451.1,281.0 355.0,322.2 259.0,363.6 170.3,401.6" fill="#ee3338"/>
<polygon points="226.1,737.4 195.8,625.2 174.0,544.1 163.0,503.6 141.9,425.6 146.0,426.0 134.2,411.7 131.6,430.1 134.9,427.6 157.5,505.1 169.2,545.4 192.9,626.0 225.5,737.6" fill="#ee3338"/>
<polygon points="946.6,102.0 973.8,112.6 1024.8,130.8 1022.3,133.7 1038.7,131.7 1026.6,120.4 1027.0,124.2 975.0,108.8 946.8,101.4" fill="#ee3338"/>
<polygon points="1056.4,160.9 1107.4,335.0 1158.2,509.1 1192.2,625.2 1226.5,741.1 1221.9,740.9 1234.2,755.0 1236.8,736.5 1233.0,739.2 1198.1,623.4 1162.8,507.7 1109.8,334.2 1057.0,160.7" fill="#ee3338"/>
</svg>
<svg class="abs" style="left:1130px;top:876px" width="142" height="50" viewBox="0 0 142 50"><defs><filter id="ws" x="-30%" y="-60%" width="160%" height="220%"><feGaussianBlur stdDeviation="2.6"/></filter><filter id="ws2" x="-30%" y="-60%" width="160%" height="220%"><feGaussianBlur stdDeviation="0.9"/></filter></defs><g opacity="0.5" filter="url(#ws)" transform="translate(1,1.5)"><path d="M33.1 13 A13.2 13.2 0 1 0 33.1 30" fill="none" stroke="#70748a" stroke-width="7"/><text transform="translate(48.5,26.6) scale(1.09,0.92)" font-family="Liberation Sans, Noto Sans CJK SC, sans-serif" font-size="19" font-weight="bold" fill="#70748a" stroke="#70748a" stroke-width="2">创新互联</text><rect x="48" y="31" width="84" height="4" fill="#70748a"/></g><g opacity="0.45" filter="url(#ws2)" transform="translate(0.8,1)"><path d="M33.1 13 A13.2 13.2 0 1 0 33.1 30" fill="none" stroke="#8a8d9e" stroke-width="4"/><text transform="translate(48.5,26.6) scale(1.09,0.92)" font-family="Liberation Sans, Noto Sans CJK SC, sans-serif" font-size="19" font-weight="bold" fill="#8a8d9e">创新互联</text></g><path d="M33.1 13 A13.2 13.2 0 1 0 33.1 30" fill="none" stroke="#fff" stroke-width="3.6"/><path d="M15 14.5 L20.5 14.5 L27 21.5 L33 29.5 L27.5 29.5 L21.5 22 Z" fill="#fff"/><path d="M16.5 28.8 C21 22.5 29 14 43.5 10.5 C36.5 16 31 24.5 24.5 30.8 C21.5 31.8 18.5 30.8 16.5 28.8 Z" fill="#f1b326"/><text transform="translate(48.5,26.6) scale(1.09,0.92)" font-family="Liberation Sans, Noto Sans CJK SC, sans-serif" font-size="19" font-weight="bold" fill="#fff">创新互联</text><text x="48.5" y="34.8" font-family="Liberation Sans, sans-serif" font-size="4.6" font-style="italic" fill="#fff" textLength="83" lengthAdjust="spacing">CHUANG XIN HU LIAN</text></svg>
</body></html>
